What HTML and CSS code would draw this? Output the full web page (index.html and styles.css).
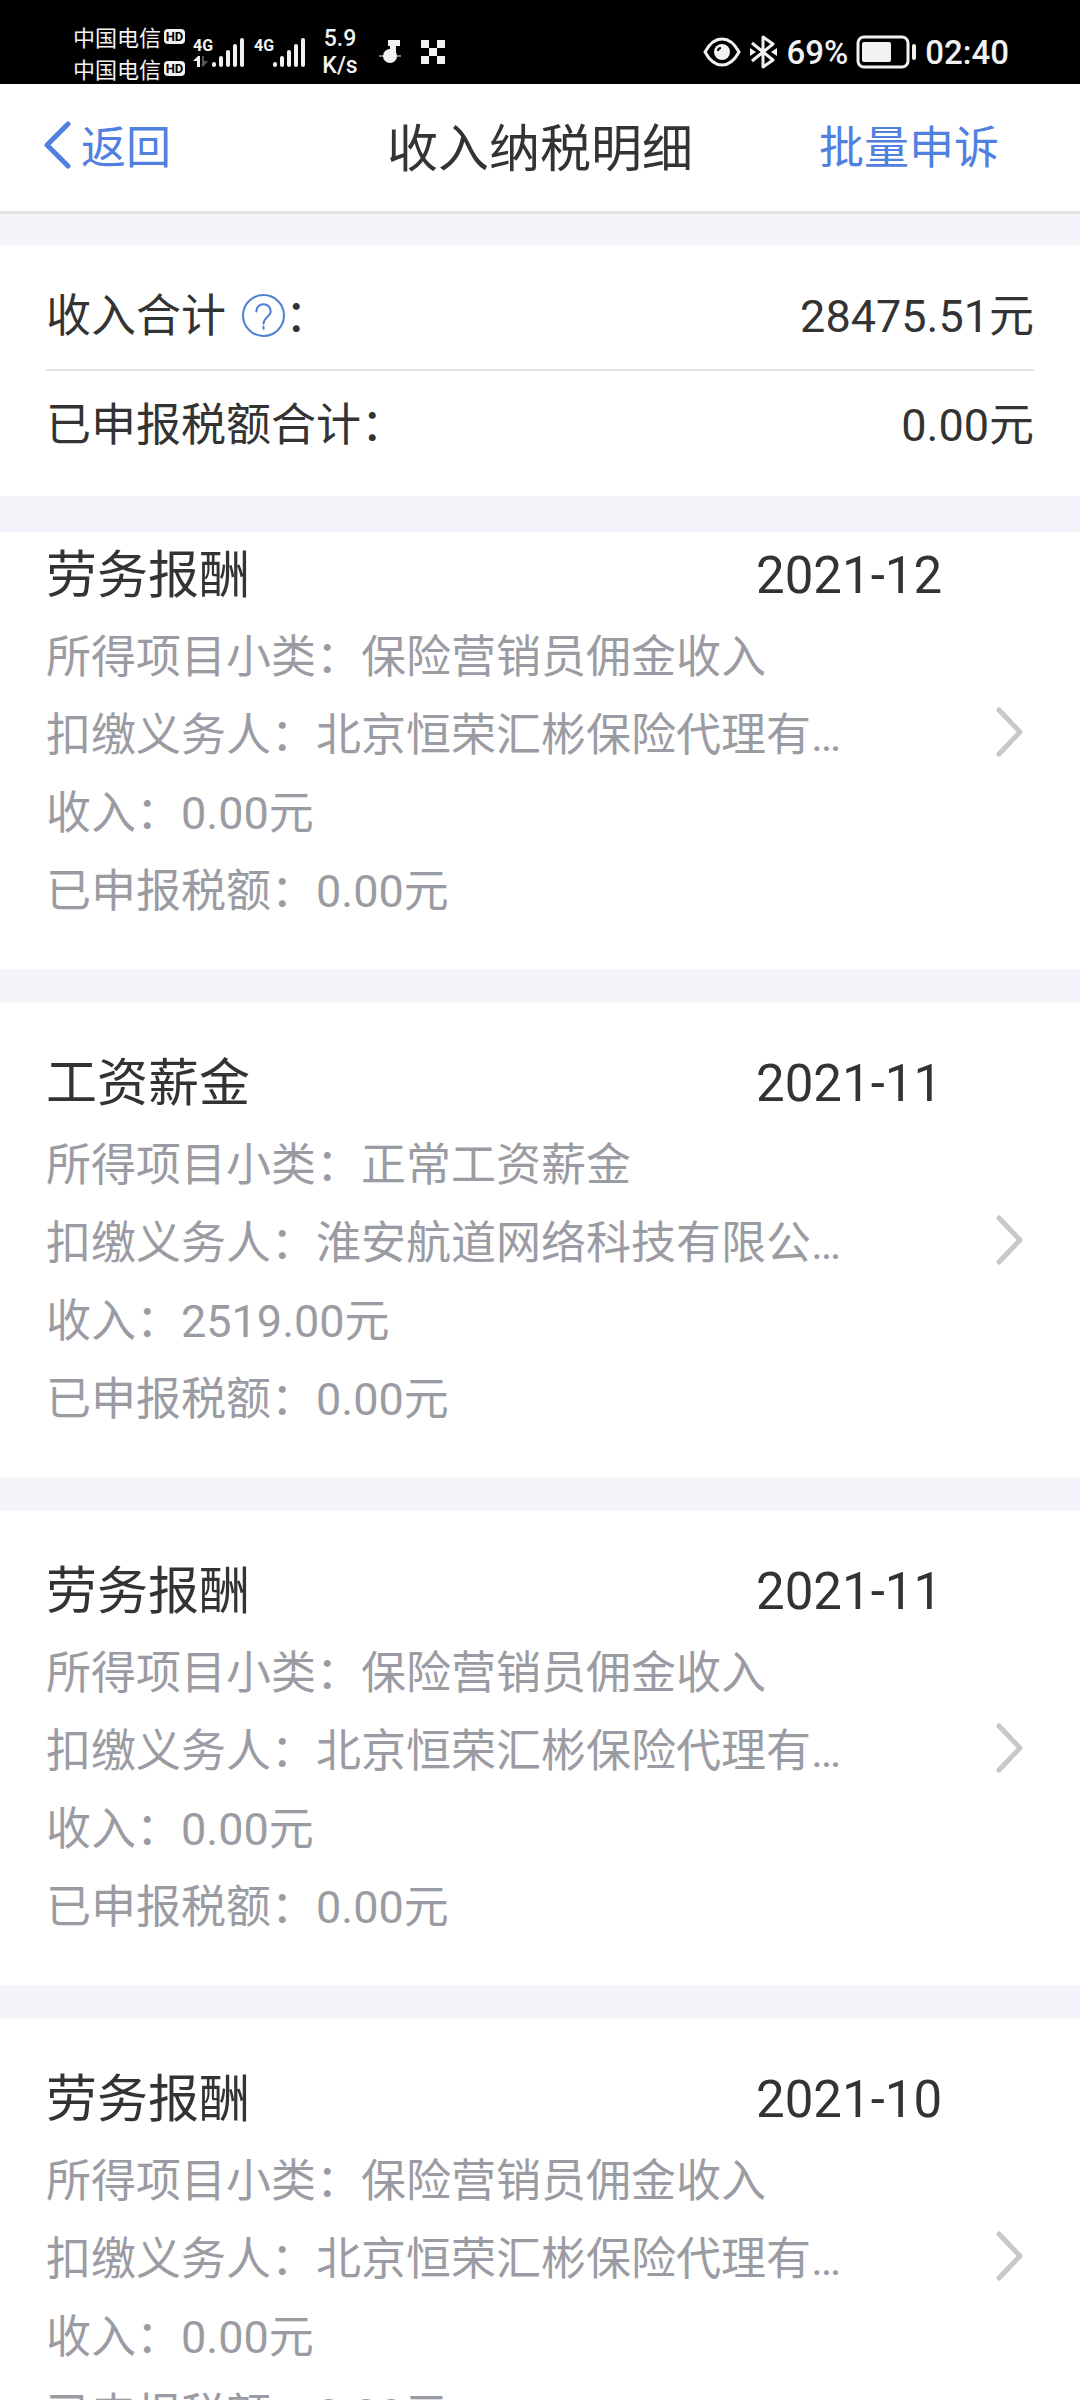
FILE: index.html
```html
<!DOCTYPE html>
<html lang="zh-CN">
  <head>
    <meta charset="UTF-8" />
    <meta name="viewport" content="width=device-width, initial-scale=1.0" />
    <title>收入纳税明细</title>
    <link rel="stylesheet" href="styles.css">
  </head>
  <body>
    <div class="status-bar">
      <div class="carriers">
        <div class="carrier">中国电信<span class="hd">HD</span></div>
        <div class="carrier">中国电信<span class="hd">HD</span></div>
      </div>
      <div class="signal">
        <div class="network">
          <span>4G</span>
          <svg width="18" height="12" viewBox="0 0 18 12">
            <path d="M0 5L5 0h2v11H4V5z" fill="#f2f2f2" />
            <path d="M9 0h2v5h4l-5 6H9z" fill="#555" />
          </svg>
        </div>
        <svg width="33" height="32" viewBox="0 0 33 32">
          <path d="M2 28v1M9 22v7M16 16v13M23 10v19M30 4v25" />
        </svg>
      </div>
      <div class="signal">
        <div class="network"><span>4G</span></div>
        <svg width="33" height="32" viewBox="0 0 33 32">
          <path d="M2 28v1M9 22v7M16 16v13M23 10v19M30 4v25" />
        </svg>
      </div>
      <div class="speed">5.9<br />K/s</div>
      <svg class="note" width="22" height="24" viewBox="0 0 22 24">
        <path d="M9 0h12v6h-4v10h-6V6H9z" fill="#f2f2f2" />
        <circle cx="11" cy="16" r="7" fill="#f2f2f2" />
        <path d="M0 16h22" stroke="#f2f2f2" />
      </svg>
      <svg class="checker" width="24" height="24" viewBox="0 0 24 24">
        <path d="M0 0h8v8H0zM16 0h8v8h-8zM8 8h8v8H8zM0 16h8v8H0zM16 16h8v8h-8z" fill="#f2f2f2" />
      </svg>
      <div class="status-right">
        <svg width="38" height="30" viewBox="0 0 38 30" fill="none" stroke="#f2f2f2" stroke-width="3">
          <path d="M2 15Q9 2 19 2t17 13Q29 28 19 28T2 15z" />
          <circle cx="19" cy="15" r="8" fill="#f2f2f2" stroke="none" />
          <path d="M15 14q0-3 3-3" stroke="#000" stroke-width="2" />
        </svg>
        <svg class="bluetooth" width="28" height="34" viewBox="0 0 28 34">
          <path d="M2 8l21 17-10 7V2l10 7L2 26" fill="none" stroke="#f2f2f2" stroke-width="3" stroke-linejoin="round" />
          <path d="M0 13l6 4-6 4zM27 13l-6 4 6 4z" fill="#f2f2f2" />
        </svg>
        <span class="percent">69%</span>
        <svg width="60" height="34" viewBox="0 0 60 34">
          <rect x="2" y="2" width="50" height="30" rx="6" fill="none" stroke="#f2f2f2" stroke-width="3" />
          <rect x="6" y="7" width="29" height="20" rx="2" fill="#f2f2f2" />
          <rect x="56" y="9" width="4" height="16" rx="2" fill="#f2f2f2" />
        </svg>
        <span class="clock">02:40</span>
      </div>
    </div>

    <header class="navbar">
      <button class="nav-button back">
        <svg width="27" height="48" viewBox="0 0 27 48">
          <path d="M24 3L3 24l21 21" />
        </svg>
        返回
      </button>
      <h1>收入纳税明细</h1>
      <button class="nav-button appeal">批量申诉</button>
    </header>

    <section class="summary">
      <div class="summary-row">
        <span class="label">收入合计
          <button class="help" aria-label="收入合计说明">
            <svg width="43" height="43" viewBox="0 0 42 42">
              <circle cx="21" cy="21" r="20" />
              <path d="M14 17c0-4 3-7 7-7s7 3 7 7c0 5-7 6-7 12" />
              <path d="M21 32v2" />
            </svg>
          </button>：</span>
        <span>28475.51元</span>
      </div>
      <div class="summary-row">
        <span class="label">已申报税额合计：</span>
        <span>0.00元</span>
      </div>
    </section>

    <main class="records">
      <a class="record" href="#">
        <div class="info">
          <div class="record-head"><h2>劳务报酬</h2><time>2021-12</time></div>
          <p>所得项目小类：保险营销员佣金收入</p>
          <p>扣缴义务人：北京恒荣汇彬保险代理有…</p>
          <p>收入：0.00元</p>
          <p>已申报税额：0.00元</p>
        </div>
        <svg class="arrow" width="28" height="50" viewBox="0 0 28 50"><path d="M3 3l21 22L3 47" /></svg>
      </a>
      <a class="record" href="#">
        <div class="info">
          <div class="record-head"><h2>工资薪金</h2><time>2021-11</time></div>
          <p>所得项目小类：正常工资薪金</p>
          <p>扣缴义务人：淮安航道网络科技有限公…</p>
          <p>收入：2519.00元</p>
          <p>已申报税额：0.00元</p>
        </div>
        <svg class="arrow" width="28" height="50" viewBox="0 0 28 50"><path d="M3 3l21 22L3 47" /></svg>
      </a>
      <a class="record" href="#">
        <div class="info">
          <div class="record-head"><h2>劳务报酬</h2><time>2021-11</time></div>
          <p>所得项目小类：保险营销员佣金收入</p>
          <p>扣缴义务人：北京恒荣汇彬保险代理有…</p>
          <p>收入：0.00元</p>
          <p>已申报税额：0.00元</p>
        </div>
        <svg class="arrow" width="28" height="50" viewBox="0 0 28 50"><path d="M3 3l21 22L3 47" /></svg>
      </a>
      <a class="record" href="#">
        <div class="info">
          <div class="record-head"><h2>劳务报酬</h2><time>2021-10</time></div>
          <p>所得项目小类：保险营销员佣金收入</p>
          <p>扣缴义务人：北京恒荣汇彬保险代理有…</p>
          <p>收入：0.00元</p>
          <p>已申报税额：0.00元</p>
        </div>
        <svg class="arrow" width="28" height="50" viewBox="0 0 28 50"><path d="M3 3l21 22L3 47" /></svg>
      </a>
    </main>
  </body>
</html>
```
FILE: styles.css
```css
* {
  box-sizing: border-box;
}

body {
  margin: 0;
  height: 100vh;
  display: flex;
  flex-direction: column;
  overflow: hidden;
  background: #f3f5fa;
  color: #333;
  font-family: Roboto, "Noto Sans CJK SC", sans-serif;
  font-size: 45px;
}

h1,
h2,
p {
  margin: 0;
  font-weight: normal;
}

button {
  padding: 0;
  border: none;
  background: none;
  color: inherit;
  font: inherit;
  cursor: pointer;
}

svg {
  display: block;
  flex-shrink: 0;
}

/* phone status bar */
.status-bar {
  height: 84px;
  flex-shrink: 0;
  display: flex;
  align-items: center;
  padding: 20px 71px 0 73px;
  background: #000;
  color: #f2f2f2;
}

.carrier {
  display: flex;
  align-items: center;
  height: 32px;
  gap: 3px;
  font-size: 22px;
}

.hd {
  width: 21px;
  border-radius: 4px;
  background: #f2f2f2;
  color: #000;
  font-size: 13px;
  font-weight: bold;
  line-height: 15px;
  text-align: center;
}

.signal {
  display: flex;
  margin-left: 8px;
}

.signal + .signal {
  margin-left: 9px;
}

.signal > svg {
  fill: none;
  stroke: #f2f2f2;
  stroke-width: 4;
  stroke-linecap: round;
}

.network {
  width: 19px;
  font-size: 16px;
  font-weight: bold;
  line-height: 20px;
}

.speed {
  margin-left: 16px;
  width: 36px;
  font-size: 23px;
  font-weight: 500;
  line-height: 27px;
  text-align: center;
}

.note {
  margin-left: 21px;
}

.checker {
  margin-left: 20px;
}

.status-right {
  margin-left: auto;
  display: flex;
  align-items: center;
  font-size: 33px;
  font-weight: 500;
}

.bluetooth {
  margin-left: 9px;
}

.percent {
  margin: 0 8px;
}

.clock {
  margin-left: 9px;
}

/* title bar */
.navbar {
  flex-shrink: 0;
  display: grid;
  grid-template-columns: 1fr auto 1fr;
  align-items: center;
  height: 130px;
  padding: 0 44px 6px;
  border-bottom: 3px solid #e0e2e3;
  background: #fff;
}

.navbar h1 {
  font-size: 51px;
}

.nav-button {
  color: #5080e0;
}

.back {
  display: flex;
  align-items: center;
  gap: 10px;
}

.back svg {
  fill: none;
  stroke: #5080e0;
  stroke-width: 5;
  stroke-linecap: round;
  stroke-linejoin: round;
}

.appeal {
  justify-self: end;
  margin-right: 37px;
}

/* totals */
.summary {
  flex-shrink: 0;
  margin-top: 31px;
  padding: 16px 46px 19px;
  background: #fff;
}

.summary-row {
  display: flex;
  justify-content: space-between;
  align-items: center;
  height: 108px;
  padding-bottom: 6px;
}

.summary-row + .summary-row {
  border-top: 2px solid #e3e3e3;
}

.label {
  display: flex;
  align-items: center;
}

.help {
  margin: 6px 0 0 16px;
}

.help svg {
  fill: none;
  stroke: #5080d0;
  stroke-width: 2;
  stroke-linecap: round;
}

/* record list, scrolled a little under the totals */
.records {
  flex: 1;
  min-height: 0;
  overflow: hidden;
  margin-top: 36px;
}

.record {
  display: flex;
  align-items: center;
  padding: 38px 56px 38px 46px;
  margin-bottom: 34px;
  background: #fff;
  color: #9b9ca3;
  text-decoration: none;
}

.record:first-child {
  margin-top: -37px;
}

.info {
  flex: 1;
  min-width: 0;
}

.info p {
  line-height: 78px;
  white-space: nowrap;
}

.record-head {
  display: flex;
  justify-content: space-between;
  color: #333;
  line-height: 86px;
}

.record-head h2,
.record-head time {
  font-size: 51px;
}

.record-head time {
  width: 190px;
}

.arrow {
  margin-left: 50px;
  fill: none;
  stroke: #c8c8c8;
  stroke-width: 5;
  stroke-linecap: round;
  stroke-linejoin: round;
}
```
